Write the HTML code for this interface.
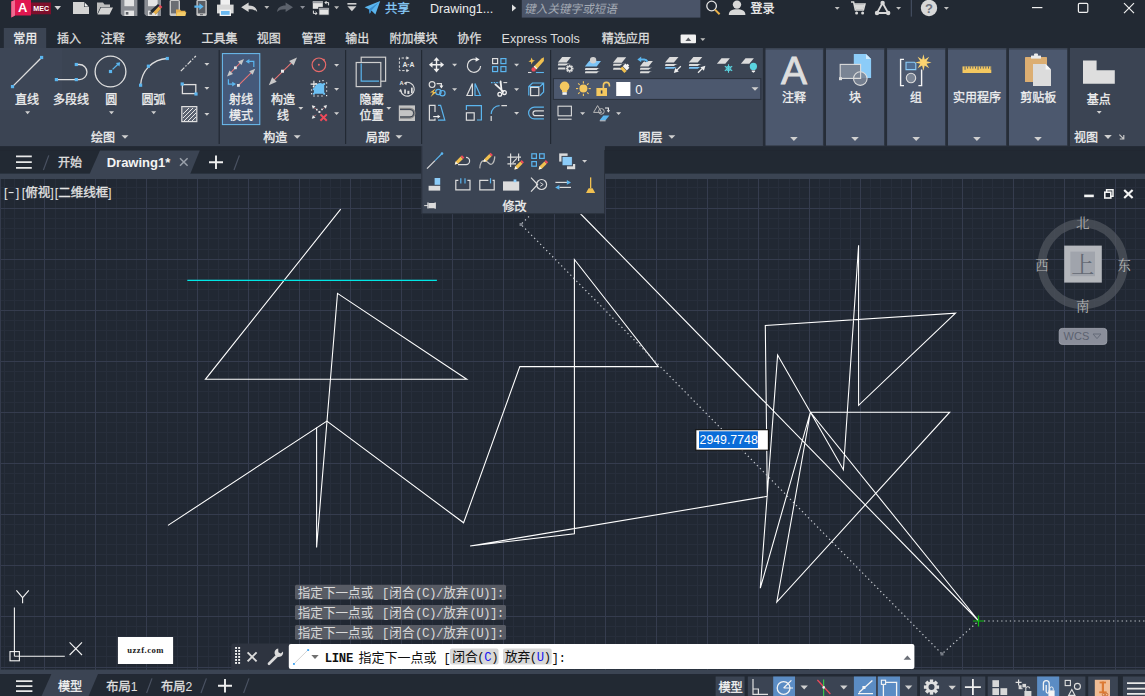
<!DOCTYPE html>
<html lang="zh"><head><meta charset="utf-8"><title>Drawing1.dwg</title>
<style>
html,body{margin:0;padding:0;background:#222933;}
body{width:1145px;height:696px;overflow:hidden;font-family:"Liberation Sans","Noto Sans CJK SC",sans-serif;}
#app{position:relative;width:1145px;height:696px;overflow:hidden;}
#app svg.main{position:absolute;left:0;top:0;display:block;}
text{white-space:pre;}
</style></head><body>
<div id="app"><svg class="main" width="1145" height="696" viewBox="0 0 1145 696">
<rect x="0" y="179" width="1145" height="491" fill="#212833"/><path d="M4.5 179V670M14.5 179V670M24.5 179V670M34.5 179V670M55.5 179V670M65.5 179V670M75.5 179V670M85.5 179V670M106.5 179V670M116.5 179V670M126.5 179V670M136.5 179V670M157.5 179V670M167.5 179V670M177.5 179V670M187.5 179V670M208.5 179V670M218.5 179V670M228.5 179V670M238.5 179V670M258.5 179V670M269.5 179V670M279.5 179V670M289.5 179V670M309.5 179V670M320.5 179V670M330.5 179V670M340.5 179V670M360.5 179V670M371.5 179V670M381.5 179V670M391.5 179V670M411.5 179V670M422.5 179V670M432.5 179V670M442.5 179V670M462.5 179V670M473.5 179V670M483.5 179V670M493.5 179V670M513.5 179V670M524.5 179V670M534.5 179V670M544.5 179V670M564.5 179V670M574.5 179V670M585.5 179V670M595.5 179V670M615.5 179V670M625.5 179V670M636.5 179V670M646.5 179V670M666.5 179V670M676.5 179V670M687.5 179V670M697.5 179V670M717.5 179V670M727.5 179V670M738.5 179V670M748.5 179V670M768.5 179V670M778.5 179V670M789.5 179V670M799.5 179V670M819.5 179V670M829.5 179V670M840.5 179V670M850.5 179V670M870.5 179V670M880.5 179V670M891.5 179V670M901.5 179V670M921.5 179V670M931.5 179V670M941.5 179V670M952.5 179V670M972.5 179V670M982.5 179V670M992.5 179V670M1003.5 179V670M1023.5 179V670M1033.5 179V670M1043.5 179V670M1054.5 179V670M1074.5 179V670M1084.5 179V670M1094.5 179V670M1105.5 179V670M1125.5 179V670M1135.5 179V670M0 187.5H1145M0 198.5H1145M0 218.5H1145M0 228.5H1145M0 238.5H1145M0 249.5H1145M0 269.5H1145M0 279.5H1145M0 289.5H1145M0 300.5H1145M0 320.5H1145M0 330.5H1145M0 340.5H1145M0 351.5H1145M0 371.5H1145M0 381.5H1145M0 391.5H1145M0 402.5H1145M0 422.5H1145M0 432.5H1145M0 442.5H1145M0 452.5H1145M0 473.5H1145M0 483.5H1145M0 493.5H1145M0 503.5H1145M0 524.5H1145M0 534.5H1145M0 544.5H1145M0 554.5H1145M0 575.5H1145M0 585.5H1145M0 595.5H1145M0 605.5H1145M0 626.5H1145M0 636.5H1145M0 646.5H1145M0 656.5H1145" stroke="#272e3b" stroke-width="1" fill="none" shape-rendering="crispEdges"/><path d="M44.5 179V670M95.5 179V670M146.5 179V670M197.5 179V670M248.5 179V670M299.5 179V670M350.5 179V670M401.5 179V670M452.5 179V670M503.5 179V670M554.5 179V670M605.5 179V670M656.5 179V670M707.5 179V670M758.5 179V670M809.5 179V670M860.5 179V670M911.5 179V670M962.5 179V670M1013.5 179V670M1064.5 179V670M1115.5 179V670M0 208.5H1145M0 259.5H1145M0 310.5H1145M0 361.5H1145M0 412.5H1145M0 463.5H1145M0 514.5H1145M0 565.5H1145M0 616.5H1145M0 667.5H1145" stroke="#353c4e" stroke-width="1" fill="none" shape-rendering="crispEdges"/><rect x="0" y="179" width="1" height="491" fill="#343b4c"/><polyline points="340.7,209.2 205.4,379.3 466.8,379.3 337.5,293.4 316.6,547.5 316.6,427.6" stroke="#ffffff" stroke-width="1.08" fill="none" stroke-linejoin="miter"/><polyline points="168,525.4 326.9,421.1 463.6,522.8 519.8,366.6 658.3,366.6 574.4,259.5 574.4,533.7 470.1,546 767.3,496.3 765.3,325.4 955.5,313.1 858.6,405.3 858.6,245.3 843.4,469.8 777.6,355 760.3,588.2 810.4,412.2 949.7,412.2 776.8,602 810.4,412.2 978.3,620.5 570,203" stroke="#ffffff" stroke-width="1.08" fill="none" stroke-linejoin="miter"/><line x1="187.3" y1="280.4" x2="436.9" y2="280.4" stroke="#00e6e6" stroke-width="1.2"/><polyline points="529,216.5 521,224.4 942,654 978.5,621" stroke="#c4c8ce" stroke-width="1.2" fill="none" stroke-dasharray="1.3 3"/><line x1="984" y1="621" x2="1145" y2="621" stroke="#c4c8ce" stroke-width="1.2" fill="none" stroke-dasharray="1.3 3"/><rect x="519.5" y="223" width="3" height="3" fill="#777c86"/><rect x="940.5" y="652.5" width="3" height="3" fill="#777c86"/><path d="M973 621H984M978.5 615.5V626.5" stroke="#10c010" stroke-width="1.2"/><rect x="0" y="0" width="1145" height="48" fill="#222933"/><path d="M11.3 1.5L15 0H31V15.5H15L11.3 17.5Z" fill="#e0174f"/><path d="M11.3 1.5L15 0V15.5L11.3 17.5Z" fill="#f06a90"/><rect x="31" y="2.5" width="20" height="11.8" fill="#7d0f2c"/><text x="18.11" y="12.40" font-size="13" fill="#ffffff" font-weight="bold" font-family='"Liberation Sans", sans-serif' >A</text><text x="33.31" y="11.40" font-size="7.1" fill="#ffffff" font-weight="bold" font-family='"Liberation Sans", sans-serif' >MEC</text><path d="M54.4 5.9h6.6l-3.3 4.2z" fill="#d4d4d4"/><path d="M73 2H84L89 7V14H73Z" fill="#d4d4d4"/><path d="M84 2V7H89Z" fill="#222933"/><path d="M84.6 2.6L88.4 6.4H84.6Z" fill="#f2f2f2"/><path d="M97 14.5V2.5H103L104.5 4.5H110V7H100.5L97 14.5Z" fill="#bdbdbd"/><path d="M101 7.6H113L109.5 14.6H97.6Z" fill="#d4d4d4"/><path d="M120.8 0H137.4V16H122.8L120.8 14Z" fill="#8a8d93"/><rect x="124.39999999999999" y="0" width="9.6" height="6.2" fill="#e4e4e4"/><rect x="124.39999999999999" y="10.6" width="9.6" height="5.4" fill="#e4e4e4"/><rect x="125.8" y="12" width="2.6" height="2.6" fill="#5a5d63"/><path d="M144.4 0H161.0V16H146.4L144.4 14Z" fill="#8a8d93"/><rect x="148.0" y="0" width="9.6" height="6.2" fill="#e4e4e4"/><rect x="148.0" y="10.6" width="9.6" height="5.4" fill="#e4e4e4"/><rect x="149.4" y="12" width="2.6" height="2.6" fill="#5a5d63"/><path d="M150 11L158 4L162 7.6L155 15Z" fill="#222933"/><path d="M152.6 15.6L153.4 12.2L158.6 6.4L161 8.6L155.8 14.4Z" fill="#e8b04a"/><path d="M158.6 6.4L160 4.8L162.4 7L161 8.6Z" fill="#e84a5a"/><path d="M152.6 15.6L153.4 12.2L155.8 14.4Z" fill="#e4e4e4"/><rect x="169.6" y="0" width="10.4" height="16" rx="1.4" fill="#c8c8c8"/><rect x="171" y="1" width="7.6" height="12.4" fill="#6a6d73"/><path d="M176 9.5H180L181 10.8H185.4V16H176Z" fill="#e8b04a"/><path d="M177.6 12.2H186.4L185 16H176Z" fill="#f4cc6a"/><rect x="196.4" y="0" width="10.4" height="16" rx="1.4" fill="#c8c8c8"/><rect x="197.8" y="1" width="7.6" height="12.4" fill="#5a5d63"/><rect x="200" y="14.2" width="3" height="1" fill="#5a5d63"/><path d="M194.4 5.4H199.4V3.2L203.6 6.6L199.4 10V7.8H194.4Z" fill="#5bb5ee"/><rect x="220.4" y="0" width="9.6" height="5" fill="#f0f0f0"/><path d="M217 4.6H233.6V13.4H217Z" fill="#d8d8d8"/><rect x="219.6" y="9.6" width="11.4" height="6.4" fill="#f4f4f4"/><rect x="221" y="11" width="8.6" height="3.8" fill="#6ab8f0"/><path d="M241.2 7.2L248.6 2.6V5.6C253.79999999999998 5.6 256.8 8 257.2 12C255.2 9.8 252.79999999999998 9.2 248.6 9.2V12Z" fill="#d4d4d4"/><path d="M264.3 5.9h5l-2.5 3z" fill="#b8b8b8"/><g transform="translate(570 0) scale(-1 1)"><path d="M277 7.2L284.4 2.6V5.6C289.6 5.6 292.6 8 293 12C291 9.8 288.6 9.2 284.4 9.2V12Z" fill="#5c626c"/></g><path d="M300.1 5.9h5l-2.5 3z" fill="#8a8e96"/><rect x="312.8" y="1.2" width="10" height="7.6" fill="#e4e4e4"/><rect x="312.8" y="1.2" width="10" height="2" fill="#9a9da3"/><rect x="318.8" y="7.4" width="10.4" height="7.8" fill="#e4e4e4" stroke="#222933" stroke-width="1"/><rect x="319.3" y="7.9" width="9.4" height="2" fill="#9a9da3"/><path d="M325 2.6H328.6V5.4M326.6 1L325 2.6L326.6 4.2" stroke="#e4e4e4" stroke-width="1" fill="none"/><path d="M313.4 10.6V13.4H317M315.4 11.8L317 13.4L315.4 15" stroke="#e4e4e4" stroke-width="1" fill="none"/><path d="M334.1 6.3h5l-2.5 3z" fill="#b8b8b8"/><rect x="347.4" y="3" width="9" height="1.6" fill="#d0d0d0"/><path d="M347.4 6.3h9l-4.5 5z" fill="#d0d0d0"/><path d="M364.6 7.2L380.2 1L375.4 14.6L371.4 10.4L369.8 13.8L368.8 9.2Z" fill="#5bb5ee"/><path d="M368.8 9.2L378.6 2.6L371.4 10.4L369.8 13.8Z" fill="#3a8fd0"/><text x="385.00" y="13.00" font-size="12.4" fill="#86c8f6" stroke="#86c8f6" stroke-width="0.3" font-family='"Liberation Sans", "Noto Sans CJK SC", sans-serif'>共享</text><text x="430.00" y="13.00" font-size="12.5" fill="#ececec" font-family='"Liberation Sans", sans-serif' >Drawing1...</text><path d="M512 4.6L516.2 8.1L512 11.6Z" fill="#e0e0e0"/><rect x="521.8" y="0" width="178.6" height="17.6" fill="#4a5468"/><text transform="translate(524.20 12.60) skewX(-12)" x="0" y="0" font-size="11.6" fill="#a4aab4" font-family='"Liberation Sans", "Noto Sans CJK SC", sans-serif'>键入关键字或短语</text><circle cx="711.6" cy="6" r="4.8" fill="none" stroke="#e4e4e4" stroke-width="1.3"/><path d="M715 9.6L719.6 14.2" stroke="#e8b04a" stroke-width="2"/><circle cx="737" cy="4.6" r="4.2" fill="#d8d8d8"/><path d="M728.8 15C728.8 10.6 732 9.2 737 9.2C742 9.2 745.4 10.6 745.4 15Z" fill="#d8d8d8"/><text x="750.40" y="13.00" font-size="12" fill="#f0f0f0" stroke="#f0f0f0" stroke-width="0.3" font-family='"Liberation Sans", "Noto Sans CJK SC", sans-serif'>登录</text><path d="M834.7 6.9h5l-2.5 2.8z" fill="#c0c0c0"/><path d="M851 2H853.6L855.4 10H863.4L865 4H854" stroke="#d8d8d8" stroke-width="1.5" fill="none"/><path d="M854.4 4.4H864.6L863.2 9.4H855.6Z" fill="#d8d8d8"/><circle cx="856.6" cy="13" r="1.5" fill="#d8d8d8"/><circle cx="862.6" cy="13" r="1.5" fill="#d8d8d8"/><path d="M882.6 3L877 13H888.2Z" fill="none" stroke="#d8d8d8" stroke-width="1.8" stroke-linejoin="round"/><circle cx="882.6" cy="3" r="2.2" fill="#d8d8d8"/><circle cx="877" cy="13" r="2.2" fill="#d8d8d8"/><circle cx="888.2" cy="13" r="2.2" fill="#d8d8d8"/><path d="M896.1 6.9h5l-2.5 2.8z" fill="#c0c0c0"/><rect x="910.8" y="0" width="1" height="16.6" fill="#4a5468"/><circle cx="929" cy="8" r="8.2" fill="#d8d8d8"/><text x="925.03" y="12.60" font-size="13" fill="#70747e" font-weight="bold" font-family='"Liberation Sans", sans-serif' >?</text><path d="M943.9 6.9h5l-2.5 2.8z" fill="#c0c0c0"/><path d="M1032 7.6H1042.4" stroke="#f0f0f0" stroke-width="1.2"/><rect x="1078.4" y="3.4" width="9.4" height="9" rx="1.2" fill="none" stroke="#f0f0f0" stroke-width="1.2"/><path d="M1124 3.2L1134 13.2M1134 3.2L1124 13.2" stroke="#f0f0f0" stroke-width="1.2"/><rect x="3.8" y="28" width="42.4" height="20.4" fill="#3b4453"/><text x="13.20" y="43.20" font-size="12" fill="#f0f0f0" stroke="#f0f0f0" stroke-width="0.3" font-family='"Liberation Sans", "Noto Sans CJK SC", sans-serif'>常用</text><text x="57.00" y="43.20" font-size="12" fill="#dcdcdc" stroke="#dcdcdc" stroke-width="0.3" font-family='"Liberation Sans", "Noto Sans CJK SC", sans-serif'>插入</text><text x="100.80" y="43.20" font-size="12" fill="#dcdcdc" stroke="#dcdcdc" stroke-width="0.3" font-family='"Liberation Sans", "Noto Sans CJK SC", sans-serif'>注释</text><text x="145.10" y="43.20" font-size="12" fill="#dcdcdc" stroke="#dcdcdc" stroke-width="0.3" font-family='"Liberation Sans", "Noto Sans CJK SC", sans-serif'>参数化</text><text x="201.40" y="43.20" font-size="12" fill="#dcdcdc" stroke="#dcdcdc" stroke-width="0.3" font-family='"Liberation Sans", "Noto Sans CJK SC", sans-serif'>工具集</text><text x="256.80" y="43.20" font-size="12" fill="#dcdcdc" stroke="#dcdcdc" stroke-width="0.3" font-family='"Liberation Sans", "Noto Sans CJK SC", sans-serif'>视图</text><text x="301.50" y="43.20" font-size="12" fill="#dcdcdc" stroke="#dcdcdc" stroke-width="0.3" font-family='"Liberation Sans", "Noto Sans CJK SC", sans-serif'>管理</text><text x="345.30" y="43.20" font-size="12" fill="#dcdcdc" stroke="#dcdcdc" stroke-width="0.3" font-family='"Liberation Sans", "Noto Sans CJK SC", sans-serif'>输出</text><text x="389.40" y="43.20" font-size="12" fill="#dcdcdc" stroke="#dcdcdc" stroke-width="0.3" font-family='"Liberation Sans", "Noto Sans CJK SC", sans-serif'>附加模块</text><text x="457.30" y="43.20" font-size="12" fill="#dcdcdc" stroke="#dcdcdc" stroke-width="0.3" font-family='"Liberation Sans", "Noto Sans CJK SC", sans-serif'>协作</text><text x="501.60" y="43.00" font-size="12.6" fill="#dcdcdc" font-family='"Liberation Sans", sans-serif' >Express Tools</text><text x="601.70" y="43.20" font-size="12" fill="#dcdcdc" stroke="#dcdcdc" stroke-width="0.3" font-family='"Liberation Sans", "Noto Sans CJK SC", sans-serif'>精选应用</text><rect x="680.6" y="34.6" width="15.4" height="8.6" rx="1" fill="#f0f0f0"/><path d="M685.4 41L688.3 37.4L691.2 41Z" fill="#5a5d63"/><path d="M700.3 38.2h5l-2.5 2.8z" fill="#c0c0c0"/><rect x="0" y="48" width="1145" height="98.4" fill="#3b4453"/><rect x="0" y="146.4" width="1145" height="4" fill="#222933"/><rect x="0" y="48" width="62" height="62" fill="#3d4656"/><path d="M12.5 86.6L41.6 57.5" stroke="#dedede" stroke-width="1.3" fill="none"/><rect x="10.9" y="85.0" width="3.2" height="3.2" fill="#5bb5ee"/><rect x="40.0" y="55.9" width="3.2" height="3.2" fill="#5bb5ee"/><text x="15.00" y="104.00" font-size="12" fill="#f0f0f0" stroke="#f0f0f0" stroke-width="0.3" font-family='"Liberation Sans", "Noto Sans CJK SC", sans-serif'>直线</text><path d="M25.1 111.3h5l-2.5 3z" fill="#d0d0d0"/><path d="M56.4 79.6H79.4A7.55 7.55 0 0 0 79.4 64.5H76.3" stroke="#dedede" stroke-width="1.3" fill="none"/><rect x="54.8" y="78.0" width="3.2" height="3.2" fill="#5bb5ee"/><rect x="74.7" y="78.0" width="3.2" height="3.2" fill="#5bb5ee"/><rect x="74.7" y="62.9" width="3.2" height="3.2" fill="#5bb5ee"/><text x="53.00" y="104.00" font-size="12" fill="#f0f0f0" stroke="#f0f0f0" stroke-width="0.3" font-family='"Liberation Sans", "Noto Sans CJK SC", sans-serif'>多段线</text><circle cx="110.5" cy="71.5" r="15.4" stroke="#dedede" stroke-width="1.3" fill="none"/><rect x="108.9" y="69.9" width="3.2" height="3.2" fill="#5bb5ee"/><path d="M112.6 69.4L118 64.2" stroke="#5bb5ee" stroke-width="1.3"/><path d="M120.2 62.2L119.4 66.6L115.8 63Z" fill="#5bb5ee"/><text x="105.20" y="104.00" font-size="12" fill="#f0f0f0" stroke="#f0f0f0" stroke-width="0.3" font-family='"Liberation Sans", "Noto Sans CJK SC", sans-serif'>圆</text><path d="M109.0 111.3h5l-2.5 3z" fill="#d0d0d0"/><path d="M140.6 85.2C141.4 71 152 59.4 167.3 58.5" stroke="#dedede" stroke-width="1.3" fill="none"/><rect x="139.0" y="83.6" width="3.2" height="3.2" fill="#5bb5ee"/><rect x="146.8" y="64.6" width="3.2" height="3.2" fill="#5bb5ee"/><rect x="165.7" y="56.9" width="3.2" height="3.2" fill="#5bb5ee"/><text x="141.40" y="104.00" font-size="12" fill="#f0f0f0" stroke="#f0f0f0" stroke-width="0.3" font-family='"Liberation Sans", "Noto Sans CJK SC", sans-serif'>圆弧</text><path d="M151.2 111.3h5l-2.5 3z" fill="#d0d0d0"/><path d="M180.8 71.1L195.9 56" stroke="#dedede" stroke-width="1.2" stroke-dasharray="5 1.6 1.4 1.6" fill="none"/><path d="M204.4 63.0h5l-2.5 2.8z" fill="#d0d0d0"/><rect x="182.4" y="84.6" width="13.4" height="9" stroke="#dedede" stroke-width="1.3" fill="none"/><rect x="180.6" y="82.4" width="3.2" height="3.2" fill="#5bb5ee"/><rect x="194.4" y="92.4" width="3.2" height="3.2" fill="#5bb5ee"/><path d="M204.4 87.0h5l-2.5 2.8z" fill="#d0d0d0"/><rect x="181.8" y="106.6" width="15" height="15" fill="#5a6270" stroke="#dedede" stroke-width="1.2"/><path d="M183 114L189 108M183 118L193 108M184 121L196 109M188 121L196 113M192 121L196 117" stroke="#e8e8e8" stroke-width="1"/><path d="M204.4 113.0h5l-2.5 2.8z" fill="#d0d0d0"/><text x="91.00" y="142.40" font-size="12" fill="#f0f0f0" stroke="#f0f0f0" stroke-width="0.3" font-family='"Liberation Sans", "Noto Sans CJK SC", sans-serif'>绘图</text><path d="M121.5 135.2h7l-3.5 3.6z" fill="#d0d0d0"/><rect x="218.6" y="50" width="1.2" height="94" fill="#222933"/><rect x="222.4" y="53.6" width="37.4" height="71" fill="#45597a" stroke="#6cbef2" stroke-width="1"/><path d="M229.4 74L241.4 61.6" stroke="#ea7474" stroke-width="1.05"/><path d="M244.0 59.0L241.5 65.0L238.0 61.5Z" fill="#c8c8c8"/><path d="M227.0 76.4L229.5 70.4L233.0 73.9Z" fill="#c8c8c8"/><rect x="234.0" y="66.4" width="2.8" height="2.8" fill="#e4e4e4"/><path d="M238.4 85.4L252.6 71.4" stroke="#ea7474" stroke-width="1.05"/><path d="M255.2 68.8L252.7 74.8L249.2 71.3Z" fill="#c8c8c8"/><rect x="237.0" y="84.0" width="2.8" height="2.8" fill="#e4e4e4"/><path d="M253.8 67V61.4H249" stroke="#5bb5ee" stroke-width="1.2" fill="none"/><path d="M245.6 61.4L249.4 59.0L249.4 63.8Z" fill="#5bb5ee"/><path d="M228.4 79.3V84.1H232.6" stroke="#5bb5ee" stroke-width="1.2" fill="none"/><path d="M236.0 84.1L232.2 86.5L232.2 81.7Z" fill="#5bb5ee"/><text x="229.00" y="103.60" font-size="12" fill="#f0f0f0" stroke="#f0f0f0" stroke-width="0.3" font-family='"Liberation Sans", "Noto Sans CJK SC", sans-serif'>射线</text><text x="229.00" y="120.20" font-size="12" fill="#f0f0f0" stroke="#f0f0f0" stroke-width="0.3" font-family='"Liberation Sans", "Noto Sans CJK SC", sans-serif'>模式</text><path d="M272.6 81.4L293.2 61.2" stroke="#ea7474" stroke-width="1.05"/><path d="M297.0 57.5L293.6 65.4L289.1 60.9Z" fill="#c8c8c8"/><path d="M268.8 85.2L272.2 77.3L276.7 81.8Z" fill="#c8c8c8"/><rect x="281.0" y="69.7" width="3" height="3" fill="#eaeaea"/><text x="271.00" y="103.60" font-size="12" fill="#f0f0f0" stroke="#f0f0f0" stroke-width="0.3" font-family='"Liberation Sans", "Noto Sans CJK SC", sans-serif'>构造</text><text x="277.00" y="120.20" font-size="12" fill="#f0f0f0" stroke="#f0f0f0" stroke-width="0.3" font-family='"Liberation Sans", "Noto Sans CJK SC", sans-serif'>线</text><path d="M298.3 107.0h5l-2.5 2.8z" fill="#d0d0d0"/><circle cx="318.9" cy="64.8" r="6.8" fill="none" stroke="#e86a6a" stroke-width="1.2"/><circle cx="318.9" cy="64.8" r="1" fill="#e86a6a"/><circle cx="323.8" cy="59.8" r="1" fill="#e86a6a"/><path d="M334.1 64.0h5l-2.5 2.8z" fill="#d0d0d0"/><path d="M313.9 93.7V89.2C314.4 85.6 317 83.2 320.2 82.9L324.2 84.1V93.7Z" fill="#6cc0f4"/><rect x="311.0" y="93.1" width="1.2" height="1.2" fill="#f0f0f0"/><rect x="311.0" y="89.4" width="1.2" height="1.2" fill="#f0f0f0"/><rect x="312.8" y="86.0" width="1.2" height="1.2" fill="#f0f0f0"/><rect x="315.4" y="83.0" width="1.2" height="1.2" fill="#f0f0f0"/><rect x="319.0" y="80.6" width="1.2" height="1.2" fill="#f0f0f0"/><rect x="322.4" y="80.0" width="1.2" height="1.2" fill="#f0f0f0"/><rect x="326.0" y="82.4" width="1.2" height="1.2" fill="#f0f0f0"/><rect x="326.0" y="86.4" width="1.2" height="1.2" fill="#f0f0f0"/><rect x="326.0" y="90.4" width="1.2" height="1.2" fill="#f0f0f0"/><rect x="326.0" y="95.0" width="1.2" height="1.2" fill="#f0f0f0"/><rect x="321.4" y="95.4" width="1.2" height="1.2" fill="#f0f0f0"/><rect x="317.4" y="95.4" width="1.2" height="1.2" fill="#f0f0f0"/><rect x="313.4" y="95.4" width="1.2" height="1.2" fill="#f0f0f0"/><rect x="312.9" y="92.8" width="1.9" height="1.9" fill="#6cc0f4"/><rect x="323.2" y="92.8" width="1.9" height="1.9" fill="#6cc0f4"/><rect x="323.2" y="83.1" width="1.9" height="1.9" fill="#6cc0f4"/><rect x="312.9" y="88.2" width="1.9" height="1.9" fill="#6cc0f4"/><path d="M310.6 84.1H317.2M313.9 80.8V87.4" stroke="#f0f0f0" stroke-width="1.1"/><path d="M334.1 88.0h5l-2.5 2.8z" fill="#d0d0d0"/><path d="M313 106.4L317 110.4M326 106L322 110M313 117.6L316.6 114" stroke="#f08080" stroke-width="1" stroke-dasharray="1.2 1.2"/><path d="M311.8 105.2L315.5 106.3L312.9 108.9Z" fill="#e8e8e8"/><path d="M327.0 105.0L325.9 108.7L323.3 106.1Z" fill="#e8e8e8"/><path d="M311.8 118.8L312.9 115.1L315.5 117.7Z" fill="#e8e8e8"/><rect x="318.4" y="110.9" width="2" height="2" fill="#e8e8e8"/><rect x="316.0" y="108.8" width="1.6" height="1.6" fill="#e8e8e8"/><rect x="321.2" y="108.6" width="1.6" height="1.6" fill="#e8e8e8"/><path d="M320.4 114.4L326.8 120.8M326.8 114.4L320.4 120.8" stroke="#f04a5a" stroke-width="2"/><path d="M334.1 112.2h5l-2.5 2.8z" fill="#d0d0d0"/><text x="263.20" y="142.40" font-size="12" fill="#f0f0f0" stroke="#f0f0f0" stroke-width="0.3" font-family='"Liberation Sans", "Noto Sans CJK SC", sans-serif'>构造</text><path d="M293.7 135.2h7l-3.5 3.6z" fill="#d0d0d0"/><rect x="345" y="50" width="1.2" height="94" fill="#222933"/><rect x="361.2" y="57.2" width="24.4" height="24" stroke="#cfcfcf" stroke-width="1.2" fill="none"/><rect x="356.2" y="62.5" width="24.6" height="24.1" fill="#3b4453" stroke="#cfcfcf" stroke-width="1.2"/><path d="M361.2 63.6V81.2H379" stroke="#5bb5ee" stroke-width="1.2" fill="none"/><text x="359.40" y="103.60" font-size="12" fill="#f0f0f0" stroke="#f0f0f0" stroke-width="0.3" font-family='"Liberation Sans", "Noto Sans CJK SC", sans-serif'>隐藏</text><text x="359.40" y="120.20" font-size="12" fill="#f0f0f0" stroke="#f0f0f0" stroke-width="0.3" font-family='"Liberation Sans", "Noto Sans CJK SC", sans-serif'>位置</text><path d="M386.3 107.0h5l-2.5 2.8z" fill="#d0d0d0"/><path d="M408 58H399.4V70.6H408" stroke="#dcdcdc" stroke-width="1" stroke-dasharray="2.4 1.6" fill="none"/><path d="M409.4 58.0L406.4 59.7L406.4 56.3Z" fill="#dcdcdc"/><path d="M409.4 70.6L406.4 72.3L406.4 68.9Z" fill="#dcdcdc"/><text x="402.40" y="67.20" font-size="6.8" fill="#e6e6e6" font-weight="bold" font-family='"Liberation Sans", sans-serif' >A</text><rect x="407.5" y="64.2" width="1.7" height="0.9" fill="#e6e6e6"/><text x="409.50" y="67.20" font-size="6.8" fill="#e6e6e6" font-weight="bold" font-family='"Liberation Sans", sans-serif' >A</text><path d="M405.4 82.6A6.9 6.9 0 1 1 400.7 91" stroke="#dcdcdc" stroke-width="1.1" fill="none"/><path d="M403.6 82.9L407.1 81.7L406.4 85.2Z" fill="#dcdcdc"/><path d="M400.9 88.8L402.1 91.9L398.7 91.3Z" fill="#dcdcdc"/><text x="399.60" y="85.40" font-size="5.6" fill="#e6e6e6" font-weight="bold" font-family='"Liberation Sans", sans-serif' >A</text><rect x="404.2" y="89.4" width="1.7" height="4.2" fill="#dcdcdc"/><rect x="407.4" y="90.8" width="2" height="3.2" fill="#dcdcdc"/><rect x="411" y="87.6" width="1.7" height="5.6" fill="#dcdcdc"/><rect x="398.8" y="105.4" width="16.2" height="15.6" fill="#c4c4c4"/><path d="M400 109H410A4 4 0 0 1 410 117.4H400" stroke="#8a8a8a" stroke-width="2.6" fill="none"/><path d="M400 109.4H410A3.6 3.6 0 0 1 410 117H400" stroke="#3b4453" stroke-width="1" fill="none"/><text x="365.70" y="142.40" font-size="12" fill="#f0f0f0" stroke="#f0f0f0" stroke-width="0.3" font-family='"Liberation Sans", "Noto Sans CJK SC", sans-serif'>局部</text><path d="M395.5 135.2h7l-3.5 3.6z" fill="#d0d0d0"/><rect x="421" y="50" width="1.2" height="94" fill="#222933"/><path d="M431.5 64.8H441.5M436.5 59.8V69.8" stroke="#f0f0f0" stroke-width="1.4"/><path d="M444.1 64.8L440.5 67.8L440.5 61.8Z" fill="#f0f0f0"/><path d="M428.9 64.8L432.5 61.8L432.5 67.8Z" fill="#f0f0f0"/><path d="M436.5 57.2L439.5 60.8L433.5 60.8Z" fill="#f0f0f0"/><path d="M436.5 72.4L433.5 68.8L439.5 68.8Z" fill="#f0f0f0"/><path d="M452.1 63.8h5l-2.5 2.8z" fill="#d0d0d0"/><path d="M476.4 59.6A6.6 6.6 0 1 0 480.6 66" stroke="#dcdcdc" stroke-width="1.2" fill="none"/><path d="M479.6 59.4L475.6 61.7L475.6 57.1Z" fill="#f0f0f0"/><rect x="492.6" y="58.6" width="5" height="5" stroke="#dcdcdc" stroke-width="1.2" fill="none"/><rect x="500.9" y="58.6" width="5" height="5" stroke="#5bb5ee" stroke-width="1.2" fill="none"/><rect x="492.6" y="66.6" width="5" height="5" stroke="#5bb5ee" stroke-width="1.2" fill="none"/><rect x="500.9" y="66.6" width="5" height="5" stroke="#5bb5ee" stroke-width="1.2" fill="none"/><path d="M514.1 63.8h5l-2.5 2.8z" fill="#d0d0d0"/><path d="M543.9 57.2V61L536.4 69.4L533.6 66.8L541.6 58.4Z" fill="#f0c050"/><circle cx="533.6" cy="69.4" r="2.2" fill="#f04a5a"/><path d="M534.2 66.2L536.8 68.8" stroke="#f4f4f4" stroke-width="1.3"/><path d="M531.6 57.4L532.6 60L535 60.4L532.8 61.8L531.4 64.6L531 62L528.4 61.4L530.6 60.2Z" fill="#f0c050"/><path d="M528 72.5H531.4" stroke="#dcdcdc" stroke-width="1.1"/><path d="M535.9 72.5H543.9" stroke="#5bb5ee" stroke-width="1.1"/><circle cx="432.1" cy="84.6" r="2.9" stroke="#dcdcdc" stroke-width="1.2" fill="none"/><path d="M436.6 83.6H441.4V86.4" stroke="#dcdcdc" stroke-width="1.2" fill="none"/><path d="M441.4 88.4L439.4 85.6L443.4 85.6Z" fill="#f0f0f0"/><circle cx="438.4" cy="92" r="2.7" stroke="#5bb5ee" stroke-width="1.2" fill="none"/><circle cx="442.4" cy="93.2" r="2.7" stroke="#5bb5ee" stroke-width="1.2" fill="none"/><path d="M435.6 88.6L430 92.6H433L430.6 97L436.4 92H433.4Z" fill="#f0c050"/><path d="M452.1 88.2h5l-2.5 2.8z" fill="#d0d0d0"/><path d="M472.4 83.6V95.5H466.9Z" stroke="#dcdcdc" stroke-width="1.2" fill="none"/><path d="M475 83.6V95.5H480.4Z" stroke="#5bb5ee" stroke-width="1.2" fill="none"/><path d="M491 82.6H499.4" stroke="#5bb5ee" stroke-width="1.1" stroke-dasharray="1.6 1"/><path d="M503.4 82.6H507.2" stroke="#dcdcdc" stroke-width="1.1"/><path d="M500.6 81.4L501.6 91M495.4 84.4L503.4 91.6" stroke="#f0f0f0" stroke-width="1.8" stroke-linecap="round"/><circle cx="499.8" cy="94.2" r="1.9" fill="none" stroke="#f0f0f0" stroke-width="1.3"/><circle cx="504.4" cy="92.6" r="1.9" fill="none" stroke="#f0f0f0" stroke-width="1.3"/><path d="M514.1 88.2h5l-2.5 2.8z" fill="#d0d0d0"/><path d="M528.8 95.6V86.6L532.4 83H543.6V92L540 95.6M543.6 83L540 86.6M539.6 86.6H529" stroke="#5bb5ee" stroke-width="1.2" fill="none"/><rect x="530.6" y="87.4" width="8.2" height="8.2" stroke="#dcdcdc" stroke-width="1.2" fill="none"/><path d="M435 112V105.4H429.4V120.2H435V118.4" stroke="#dcdcdc" stroke-width="1.2" fill="none"/><path d="M438 105.4H440.6L444.8 120.2H438" stroke="#5bb5ee" stroke-width="1.2" fill="none"/><path d="M433.2 116.6H438" stroke="#f0f0f0" stroke-width="1.2"/><path d="M440.4 116.6L437.6 118.4L437.6 114.8Z" fill="#f0f0f0"/><path d="M466.4 110V105.6H481.4V120H477" stroke="#5bb5ee" stroke-width="1.2" fill="none"/><rect x="466.4" y="112.8" width="7.8" height="7.4" stroke="#dcdcdc" stroke-width="1.2" fill="none"/><path d="M491.2 114A8.4 8.4 0 0 1 499.6 105.7" stroke="#5bb5ee" stroke-width="1.2" fill="none"/><path d="M501.4 105.7H507M491.2 116V121" stroke="#dcdcdc" stroke-width="1.2" fill="none"/><path d="M514.1 112.0h5l-2.5 2.8z" fill="#d0d0d0"/><path d="M543.9 107.2H534.4A5.8 5.8 0 0 0 534.4 118.8H543.9" stroke="#5bb5ee" stroke-width="1.2" fill="none"/><path d="M543.9 110.9H535.4A2.4 2.4 0 0 0 535.4 115.7H543.9" stroke="#dcdcdc" stroke-width="1.2" fill="none"/><rect x="550" y="50" width="1.2" height="94" fill="#222933"/><path d="M562.2 57H571.0L566.6 62.4H557.8Z" fill="#dcdcdc"/><path d="M558.3 63.4H570.3L568.6 63.8L566.6 65.4H557.8Z" fill="#dcdcdc"/><path d="M558.3 67.4H570.3L568.6 67.8L566.6 69.4H557.8Z" fill="#dcdcdc"/><circle cx="569.6" cy="68.6" r="4.6" fill="#3b4453"/><rect x="-0.9" y="-3.9" width="1.8" height="2" fill="#dcdcdc" transform="translate(569.6 68.6) rotate(0)"/><rect x="-0.9" y="-3.9" width="1.8" height="2" fill="#dcdcdc" transform="translate(569.6 68.6) rotate(45)"/><rect x="-0.9" y="-3.9" width="1.8" height="2" fill="#dcdcdc" transform="translate(569.6 68.6) rotate(90)"/><rect x="-0.9" y="-3.9" width="1.8" height="2" fill="#dcdcdc" transform="translate(569.6 68.6) rotate(135)"/><rect x="-0.9" y="-3.9" width="1.8" height="2" fill="#dcdcdc" transform="translate(569.6 68.6) rotate(180)"/><rect x="-0.9" y="-3.9" width="1.8" height="2" fill="#dcdcdc" transform="translate(569.6 68.6) rotate(225)"/><rect x="-0.9" y="-3.9" width="1.8" height="2" fill="#dcdcdc" transform="translate(569.6 68.6) rotate(270)"/><rect x="-0.9" y="-3.9" width="1.8" height="2" fill="#dcdcdc" transform="translate(569.6 68.6) rotate(315)"/><circle cx="569.6" cy="68.6" r="2.1" fill="none" stroke="#dcdcdc" stroke-width="1.3"/><path d="M589.2 61.1H601.0L596.7 66.6H584.9Z" fill="#7cc4f6"/><path d="M585.4 67.9H600.3L598.6 68.3L596.7 69.9H584.9Z" fill="#dcdcdc"/><path d="M585.4 71.2H600.3L598.6 71.6L596.7 73.2H584.9Z" fill="#dcdcdc"/><circle cx="593.1" cy="60.2" r="3.2" fill="#d0d0d0"/><path d="M617.4 57.3H626.2L621.8 62.699999999999996H613.0Z" fill="#dcdcdc"/><path d="M613.5 63.7H625.5L623.8 64.1L621.8 65.7H613.0Z" fill="#dcdcdc"/><path d="M613.5 67.7H625.5L623.8 68.1L621.8 69.7H613.0Z" fill="#dcdcdc"/><path d="M619.4 66.6L622.6 63.4L630 69.4L626 73.6Z" fill="#3b4453"/><path d="M620.2 68.6L622.4 66.6L626.6 71L624.4 73Z" fill="#f0c050"/><path d="M622.8 66.2L625.4 63.6L626.6 64.8L627.6 63.8L629.2 65.6L628.2 66.6L629.4 67.8L626.8 70.4Z" fill="#f4f4f4"/><path d="M644.2 61.1H652.9L648.6 66.4H639.9Z" fill="#dcdcdc"/><path d="M640.4 67.8H652.3L650.5 68.2L648.6 69.8H639.9Z" fill="#dcdcdc"/><path d="M640.4 71.2H652.3L650.5 71.6L648.6 73.2H639.9Z" fill="#dcdcdc"/><path d="M641 59.4H644.6A3.4 3.4 0 0 1 647.6 61.4" stroke="#3b4453" stroke-width="4" fill="none"/><path d="M641 59.4H644.2A3.6 3.6 0 0 1 647.4 61.6" stroke="#5bb5ee" stroke-width="2" fill="none"/><path d="M637.4 59.4L641.2 56.5L641.2 62.3Z" fill="#5bb5ee"/><path d="M669.6 57H678.5L673.9 62.4H665.0Z" fill="#dcdcdc"/><path d="M665.5 64.0H677.7L675.9 64.4L673.9 65.9H665.0Z" fill="#dcdcdc"/><path d="M665.5 66.9H677.7L675.9 67.3L673.9 68.8H665.0Z" fill="#7cc4f6"/><path d="M681.6 65.4L675 72" stroke="#3b4453" stroke-width="3.6"/><path d="M680.8 66.2L676.6 70.4" stroke="#f0f0f0" stroke-width="1.3"/><path d="M673.8 73.0L675.3 68.0L678.8 71.5Z" fill="#f0f0f0"/><path d="M693.4 57H702.3L697.7 62.4H688.8Z" fill="#dcdcdc"/><path d="M689.3 64.0H701.5L699.7 64.4L697.7 65.9H688.8Z" fill="#dcdcdc"/><path d="M689.3 66.9H701.5L699.7 67.3L697.7 68.8H688.8Z" fill="#7cc4f6"/><path d="M697 73.6L704 66.6" stroke="#3b4453" stroke-width="3.6"/><path d="M698 72.8L702.4 68.4" stroke="#f0f0f0" stroke-width="1.3"/><path d="M705.4 65.8L703.9 70.8L700.4 67.3Z" fill="#f0f0f0"/><path d="M721.5 58.2H729.9L725.3 63.7H716.9Z" fill="#dcdcdc"/><path d="M728.5 64.2V72.8M724.8 66.35L732.2 70.65M724.8 70.65L732.2 66.35" stroke="#5ad4e0" stroke-width="1.1"/><path d="M728.5 66L730.7 67.25V69.75L728.5 71L726.3 69.75V67.25Z" fill="none" stroke="#5ad4e0" stroke-width="0.9"/><path d="M745.5 58.2H753.9L749.3 63.7H740.9Z" fill="#dcdcdc"/><circle cx="753.4" cy="66.4" r="3.6" fill="#5ad4e0"/><path d="M751.7 70.4H755.1V71.6L753.4 72.8L751.7 71.6Z" fill="#f4f4f4"/><rect x="553.4" y="78.6" width="207.4" height="20.8" fill="#4c586e" stroke="#2a313c" stroke-width="1"/><circle cx="564.6" cy="86.4" r="4.8" fill="#f4c860"/><path d="M562 90H567.2V92H562Z" fill="#f4c860"/><rect x="562.4" y="92.2" width="4.4" height="2.6" fill="#f4f4f4"/><circle cx="583.4" cy="88.6" r="4" fill="#f4c860"/><path d="M588.6 88.6L590.8 88.6" stroke="#f4c860" stroke-width="1.1"/><path d="M587.1 92.3L588.6 93.8" stroke="#f4c860" stroke-width="1.1"/><path d="M583.4 93.8L583.4 96.0" stroke="#f4c860" stroke-width="1.1"/><path d="M579.7 92.3L578.2 93.8" stroke="#f4c860" stroke-width="1.1"/><path d="M578.2 88.6L576.0 88.6" stroke="#f4c860" stroke-width="1.1"/><path d="M579.7 84.9L578.2 83.4" stroke="#f4c860" stroke-width="1.1"/><path d="M583.4 83.4L583.4 81.2" stroke="#f4c860" stroke-width="1.1"/><path d="M587.1 84.9L588.6 83.4" stroke="#f4c860" stroke-width="1.1"/><rect x="596.4" y="88" width="10.6" height="8" fill="#f4c860"/><path d="M603.4 88V85.4A3 3 0 0 1 609.4 85.4V86.6" stroke="#f4c860" stroke-width="1.6" fill="none"/><rect x="600.8" y="90.4" width="1.6" height="3.2" fill="#3b4453"/><rect x="616.2" y="82" width="14.2" height="14" fill="#ffffff"/><text x="635.20" y="93.60" font-size="13" fill="#f4f4f4" font-family='"Liberation Sans", sans-serif' >0</text><path d="M751.5 87.2h7l-3.5 3.6z" fill="#d0d0d0"/><rect x="558" y="106.2" width="13.4" height="9.6" fill="none" stroke="#dcdcdc" stroke-width="1.1"/><path d="M558 119.2H571.6" stroke="#dcdcdc" stroke-width="1.1"/><path d="M580.1 112.2h5l-2.5 2.8z" fill="#d0d0d0"/><path d="M597.6 105.6L601.6 112.4H593.6Z" fill="none" stroke="#b8b8b8" stroke-width="1"/><circle cx="601.4" cy="111.4" r="2.8" fill="none" stroke="#b8b8b8" stroke-width="1"/><path d="M605 108H608.4V110.6" stroke="#f0f0f0" stroke-width="1.1" fill="none"/><path d="M608.4 112.6L606.7 110.2L610.1 110.2Z" fill="#f0f0f0"/><path d="M603.4 115.4H609.4L605.6 120.2H599.6Z" fill="#5bb5ee"/><path d="M599.8 120.8H605.6" stroke="#f0f0f0" stroke-width="0.8"/><path d="M616.1 112.2h5l-2.5 2.8z" fill="#d0d0d0"/><text x="638.40" y="142.40" font-size="12" fill="#f0f0f0" stroke="#f0f0f0" stroke-width="0.3" font-family='"Liberation Sans", "Noto Sans CJK SC", sans-serif'>图层</text><path d="M668.3 135.2h7l-3.5 3.6z" fill="#d0d0d0"/><rect x="764.9" y="49.6" width="58.0" height="95.4" fill="#4c586e"/><path d="M790.1 137.0h7.6l-3.8 4z" fill="#d0d0d0"/><rect x="826" y="49.6" width="58.0" height="95.4" fill="#4c586e"/><path d="M851.2 137.0h7.6l-3.8 4z" fill="#d0d0d0"/><rect x="887.2" y="49.6" width="58.0" height="95.4" fill="#4c586e"/><path d="M912.4 137.0h7.6l-3.8 4z" fill="#d0d0d0"/><rect x="947.6" y="49.6" width="58.5" height="95.4" fill="#4c586e"/><path d="M973.1 137.0h7.6l-3.8 4z" fill="#d0d0d0"/><rect x="1008.8" y="49.6" width="58.5" height="95.4" fill="#4c586e"/><path d="M1034.2 137.0h7.6l-3.8 4z" fill="#d0d0d0"/><rect x="762.9" y="48" width="2.6" height="98.4" fill="#262d38"/><rect x="823.4" y="48" width="2.6" height="98.4" fill="#262d38"/><rect x="884.4" y="48" width="2.6" height="98.4" fill="#262d38"/><rect x="945.4" y="48" width="2.6" height="98.4" fill="#262d38"/><rect x="1006.4" y="48" width="2.6" height="98.4" fill="#262d38"/><rect x="1067.4" y="48" width="2.6" height="98.4" fill="#262d38"/><text x="780.99" y="84.30" font-size="39" fill="#dedede" font-family='"Liberation Sans", sans-serif' stroke="#dedede" stroke-width="0.9">A</text><text x="782.00" y="101.60" font-size="12" fill="#f0f0f0" stroke="#f0f0f0" stroke-width="0.3" font-family='"Liberation Sans", "Noto Sans CJK SC", sans-serif'>注释</text><path d="M853.8 54H866L871.1 59.1V77.9H853.8Z" fill="#8cccf8"/><path d="M866 54V59.1H871.1Z" fill="#d0eafc"/><rect x="840.2" y="64.4" width="20.4" height="14" fill="#7a8494" stroke="#dcdcdc" stroke-width="1.1"/><circle cx="860.3" cy="78.6" r="6.8" fill="#7a8494" fill-opacity="0.85" stroke="#dcdcdc" stroke-width="1.1"/><path d="M860.6 71.8V78.4H853.6" stroke="#dcdcdc" stroke-width="1.1" fill="none"/><rect x="839" y="77.2" width="3" height="3" fill="#dcdcdc"/><text x="849.00" y="101.60" font-size="12" fill="#f0f0f0" stroke="#f0f0f0" stroke-width="0.3" font-family='"Liberation Sans", "Noto Sans CJK SC", sans-serif'>块</text><path d="M904 59.4H900.6V85.6H904M918.4 85.6H921.6V69.4" stroke="#f4f4f4" stroke-width="1.4" fill="none"/><path d="M906 62.2H914.4L915.8 63.6V69.6H906Z" fill="#4e6c92" stroke="#8cccf8" stroke-width="1.1"/><circle cx="911" cy="78" r="4.7" fill="#7a8494" stroke="#dcdcdc" stroke-width="1.1"/><polygon points="923.4,54.3 924.7,59.4 929.2,56.7 926.5,61.2 931.6,62.5 926.5,63.8 929.2,68.3 924.7,65.6 923.4,70.7 922.1,65.6 917.6,68.3 920.3,63.8 915.2,62.5 920.3,61.2 917.6,56.7 922.1,59.4" fill="#fcd470"/><text x="910.00" y="101.60" font-size="12" fill="#f0f0f0" stroke="#f0f0f0" stroke-width="0.3" font-family='"Liberation Sans", "Noto Sans CJK SC", sans-serif'>组</text><rect x="962.5" y="66.4" width="28.8" height="6.6" fill="#f4c860"/><rect x="964.6" y="66.4" width="0.9" height="3.4" fill="#4c586e"/><rect x="967.2" y="66.4" width="0.9" height="2.2" fill="#4c586e"/><rect x="969.8" y="66.4" width="0.9" height="2.2" fill="#4c586e"/><rect x="972.4" y="66.4" width="0.9" height="2.2" fill="#4c586e"/><rect x="975.0" y="66.4" width="0.9" height="2.2" fill="#4c586e"/><rect x="977.6" y="66.4" width="0.9" height="3.4" fill="#4c586e"/><rect x="980.2" y="66.4" width="0.9" height="2.2" fill="#4c586e"/><rect x="982.8" y="66.4" width="0.9" height="2.2" fill="#4c586e"/><rect x="985.4" y="66.4" width="0.9" height="2.2" fill="#4c586e"/><rect x="988.0" y="66.4" width="0.9" height="2.2" fill="#4c586e"/><rect x="990.6" y="66.4" width="0.9" height="3.4" fill="#4c586e"/><text x="953.00" y="101.60" font-size="12" fill="#f0f0f0" stroke="#f0f0f0" stroke-width="0.3" font-family='"Liberation Sans", "Noto Sans CJK SC", sans-serif'>实用程序</text><rect x="1025" y="57" width="22" height="25" rx="0.6" fill="#dcae72"/><rect x="1031" y="55.6" width="10" height="3" fill="#ececec"/><rect x="1034" y="53.6" width="4" height="2.6" rx="1" fill="#ececec"/><path d="M1033 64H1045.6L1051 69.4V86H1033Z" fill="#dcdcdc"/><path d="M1045.6 64V69.4H1051Z" fill="#f8f8f8"/><text x="1020.20" y="101.60" font-size="12" fill="#f0f0f0" stroke="#f0f0f0" stroke-width="0.3" font-family='"Liberation Sans", "Noto Sans CJK SC", sans-serif'>剪贴板</text><path d="M1083 60.4H1096.6V70.2H1114.8V83.8H1083Z" fill="#dedede"/><text x="1086.80" y="104.00" font-size="12" fill="#f0f0f0" stroke="#f0f0f0" stroke-width="0.3" font-family='"Liberation Sans", "Noto Sans CJK SC", sans-serif'>基点</text><path d="M1096.7 111.0h5l-2.5 2.8z" fill="#d0d0d0"/><text x="1073.90" y="142.00" font-size="12" fill="#f0f0f0" stroke="#f0f0f0" stroke-width="0.3" font-family='"Liberation Sans", "Noto Sans CJK SC", sans-serif'>视图</text><path d="M1104.2 135.0h7.6l-3.8 4z" fill="#d0d0d0"/><path d="M1119.4 134.6L1123.4 138.6M1123.8 135V139H1119.8" stroke="#c8c8c8" stroke-width="1.2" fill="none"/><rect x="0" y="150.4" width="1145" height="23.4" fill="#222933"/><rect x="0" y="173.6" width="1145" height="5.4" fill="#3b4453"/><path d="M89.6 174L100 150.4H199.8L190.2 174Z" fill="#3b4453"/><path d="M16 156.4H31.8M16 162.1H31.8M16 167.8H31.8" stroke="#e8e8e8" stroke-width="1.7"/><path d="M43.4 170L48.8 155.4" stroke="#4a5262" stroke-width="1.2"/><path d="M234 170L239.4 155.4" stroke="#4a5262" stroke-width="1.2"/><text x="57.90" y="166.80" font-size="12" fill="#e0e0e0" stroke="#e0e0e0" stroke-width="0.3" font-family='"Liberation Sans", "Noto Sans CJK SC", sans-serif'>开始</text><text x="106.70" y="167.00" font-size="13" fill="#f4f4f4" font-weight="bold" font-family='"Liberation Sans", sans-serif' >Drawing1*</text><path d="M180 158.2L187.6 165.8M187.6 158.2L180 165.8" stroke="#9aa0aa" stroke-width="1.5"/><path d="M209 162.2H223M216 155.4V169" stroke="#f0f0f0" stroke-width="1.9"/><text x="3.90" y="196.80" font-size="12.6" fill="#e4e4e4" font-family='"Liberation Sans", sans-serif' >[</text><text x="15.70" y="196.80" font-size="12.6" fill="#e4e4e4" font-family='"Liberation Sans", sans-serif' >]</text><text x="21.80" y="196.80" font-size="12.6" fill="#e4e4e4" font-family='"Liberation Sans", sans-serif' >[</text><text x="50.30" y="196.80" font-size="12.6" fill="#e4e4e4" font-family='"Liberation Sans", sans-serif' >]</text><text x="54.70" y="196.80" font-size="12.6" fill="#e4e4e4" font-family='"Liberation Sans", sans-serif' >[</text><text x="108.00" y="196.80" font-size="12.6" fill="#e4e4e4" font-family='"Liberation Sans", sans-serif' >]</text><rect x="8.6" y="192" width="5" height="1.1" fill="#e4e4e4"/><text x="25.20" y="197.20" font-size="12.5" fill="#e4e4e4" stroke="#e4e4e4" stroke-width="0.3" font-family='"Liberation Sans", "Noto Sans CJK SC", sans-serif'>俯视</text><text x="58.20" y="197.20" font-size="12.5" fill="#e4e4e4" stroke="#e4e4e4" stroke-width="0.3" font-family='"Liberation Sans", "Noto Sans CJK SC", sans-serif'>二维线框</text><rect x="1084.2" y="194.6" width="9.6" height="2.6" fill="#f4f4f4"/><path d="M1106.6 192V189.8H1113V196.2H1110.8" stroke="#f4f4f4" stroke-width="1.5" fill="none"/><rect x="1104.8" y="192.2" width="6" height="5.8" fill="none" stroke="#f4f4f4" stroke-width="1.6"/><path d="M1124.2 190L1132.6 198M1132.6 190L1124.2 198" stroke="#f4f4f4" stroke-width="2.2"/><circle cx="1082.8" cy="264.1" r="40.8" fill="none" stroke="#585d66" stroke-opacity="0.62" stroke-width="8.4"/><rect x="1064.2" y="245.6" width="37.6" height="37" fill="#b4b7bc"/><rect x="1070.4" y="251.6" width="24.6" height="24.6" fill="#a0a4ac"/><text x="1071.30" y="273.20" font-size="23" fill="#646a74" font-family='"Liberation Serif", "Noto Serif CJK SC", serif'>上</text><text x="1076.10" y="228.10" font-size="13.4" fill="#b4b4b4" font-family='"Liberation Serif", "Noto Serif CJK SC", serif'>北</text><text x="1076.10" y="311.30" font-size="13.4" fill="#b4b4b4" font-family='"Liberation Serif", "Noto Serif CJK SC", serif'>南</text><text x="1035.20" y="269.90" font-size="13.4" fill="#b4b4b4" font-family='"Liberation Serif", "Noto Serif CJK SC", serif'>西</text><text x="1117.60" y="269.90" font-size="13.4" fill="#b4b4b4" font-family='"Liberation Serif", "Noto Serif CJK SC", serif'>东</text><rect x="1059.2" y="328.4" width="47.6" height="16" rx="3" fill="#8a8e9a" stroke="#a4a8b2" stroke-width="0.8"/><text x="1063.60" y="340.40" font-size="11" fill="#5c6270" font-family='"Liberation Sans", sans-serif' >WCS</text><path d="M1093 334L1097 338.6L1101 334Z" fill="none" stroke="#646a78" stroke-width="1"/><path d="M14.4 607.4V651.4M19.6 656.2H64.8" stroke="#f4f4f4" stroke-width="1.1"/><rect x="10" y="651.6" width="9.4" height="9.2" fill="none" stroke="#f4f4f4" stroke-width="1.1"/><path d="M14.4 651.6V656.2H19.4" stroke="#f4f4f4" stroke-width="1" fill="none"/><path d="M16.4 590.4L22.6 597.6L28.8 590.4M22.6 597.6V603.2" stroke="#f4f4f4" stroke-width="1.1" fill="none"/><path d="M69.6 642.4L82 655M82 642.4L69.6 655" stroke="#f4f4f4" stroke-width="1.1"/><rect x="117.9" y="637" width="55.2" height="27" fill="#ffffff"/><text x="127.24" y="653.40" font-size="8.6" fill="#181818" font-weight="bold" letter-spacing="0.5" font-family='"Liberation Serif", serif' >uzzf.com</text><rect x="295" y="584.8" width="211" height="14.8" rx="1.5" fill="#5c6068" fill-opacity="0.92"/><text x="297.70" y="597.20" font-size="12.6" fill="#d8d8d8" font-family='"Liberation Mono", "Noto Sans CJK SC", monospace'>指定下一点或</text><text x="381.72" y="597.20" font-size="12.6" fill="#d8d8d8" font-family='"Liberation Mono", monospace' >[</text><text x="389.30" y="597.20" font-size="12.6" fill="#d8d8d8" font-family='"Liberation Mono", "Noto Sans CJK SC", monospace'>闭合</text><text x="414.94" y="597.20" font-size="12.6" fill="#d8d8d8" font-family='"Liberation Mono", monospace' >(</text><text x="421.99" y="597.20" font-size="12.6" fill="#d8d8d8" font-family='"Liberation Mono", monospace' >C</text><text x="429.04" y="597.20" font-size="12.6" fill="#d8d8d8" font-family='"Liberation Mono", monospace' >)</text><text x="436.09" y="597.20" font-size="12.6" fill="#d8d8d8" font-family='"Liberation Mono", monospace' >/</text><text x="443.20" y="597.20" font-size="12.6" fill="#d8d8d8" font-family='"Liberation Mono", "Noto Sans CJK SC", monospace'>放弃</text><text x="469.34" y="597.20" font-size="12.6" fill="#d8d8d8" font-family='"Liberation Mono", monospace' >(</text><text x="476.19" y="597.20" font-size="12.6" fill="#d8d8d8" font-family='"Liberation Mono", monospace' >U</text><text x="483.04" y="597.20" font-size="12.6" fill="#d8d8d8" font-family='"Liberation Mono", monospace' >)</text><text x="489.89" y="597.20" font-size="12.6" fill="#d8d8d8" font-family='"Liberation Mono", monospace' >]</text><text x="496.74" y="597.20" font-size="12.6" fill="#d8d8d8" font-family='"Liberation Mono", monospace' >:</text><rect x="295" y="604.9" width="211" height="14.8" rx="1.5" fill="#5c6068" fill-opacity="0.92"/><text x="297.70" y="617.30" font-size="12.6" fill="#d8d8d8" font-family='"Liberation Mono", "Noto Sans CJK SC", monospace'>指定下一点或</text><text x="381.72" y="617.30" font-size="12.6" fill="#d8d8d8" font-family='"Liberation Mono", monospace' >[</text><text x="389.30" y="617.30" font-size="12.6" fill="#d8d8d8" font-family='"Liberation Mono", "Noto Sans CJK SC", monospace'>闭合</text><text x="414.94" y="617.30" font-size="12.6" fill="#d8d8d8" font-family='"Liberation Mono", monospace' >(</text><text x="421.99" y="617.30" font-size="12.6" fill="#d8d8d8" font-family='"Liberation Mono", monospace' >C</text><text x="429.04" y="617.30" font-size="12.6" fill="#d8d8d8" font-family='"Liberation Mono", monospace' >)</text><text x="436.09" y="617.30" font-size="12.6" fill="#d8d8d8" font-family='"Liberation Mono", monospace' >/</text><text x="443.20" y="617.30" font-size="12.6" fill="#d8d8d8" font-family='"Liberation Mono", "Noto Sans CJK SC", monospace'>放弃</text><text x="469.34" y="617.30" font-size="12.6" fill="#d8d8d8" font-family='"Liberation Mono", monospace' >(</text><text x="476.19" y="617.30" font-size="12.6" fill="#d8d8d8" font-family='"Liberation Mono", monospace' >U</text><text x="483.04" y="617.30" font-size="12.6" fill="#d8d8d8" font-family='"Liberation Mono", monospace' >)</text><text x="489.89" y="617.30" font-size="12.6" fill="#d8d8d8" font-family='"Liberation Mono", monospace' >]</text><text x="496.74" y="617.30" font-size="12.6" fill="#d8d8d8" font-family='"Liberation Mono", monospace' >:</text><rect x="295" y="625" width="211" height="14.8" rx="1.5" fill="#5c6068" fill-opacity="0.92"/><text x="297.70" y="637.40" font-size="12.6" fill="#d8d8d8" font-family='"Liberation Mono", "Noto Sans CJK SC", monospace'>指定下一点或</text><text x="381.72" y="637.40" font-size="12.6" fill="#d8d8d8" font-family='"Liberation Mono", monospace' >[</text><text x="389.30" y="637.40" font-size="12.6" fill="#d8d8d8" font-family='"Liberation Mono", "Noto Sans CJK SC", monospace'>闭合</text><text x="414.94" y="637.40" font-size="12.6" fill="#d8d8d8" font-family='"Liberation Mono", monospace' >(</text><text x="421.99" y="637.40" font-size="12.6" fill="#d8d8d8" font-family='"Liberation Mono", monospace' >C</text><text x="429.04" y="637.40" font-size="12.6" fill="#d8d8d8" font-family='"Liberation Mono", monospace' >)</text><text x="436.09" y="637.40" font-size="12.6" fill="#d8d8d8" font-family='"Liberation Mono", monospace' >/</text><text x="443.20" y="637.40" font-size="12.6" fill="#d8d8d8" font-family='"Liberation Mono", "Noto Sans CJK SC", monospace'>放弃</text><text x="469.34" y="637.40" font-size="12.6" fill="#d8d8d8" font-family='"Liberation Mono", monospace' >(</text><text x="476.19" y="637.40" font-size="12.6" fill="#d8d8d8" font-family='"Liberation Mono", monospace' >U</text><text x="483.04" y="637.40" font-size="12.6" fill="#d8d8d8" font-family='"Liberation Mono", monospace' >)</text><text x="489.89" y="637.40" font-size="12.6" fill="#d8d8d8" font-family='"Liberation Mono", monospace' >]</text><text x="496.74" y="637.40" font-size="12.6" fill="#d8d8d8" font-family='"Liberation Mono", monospace' >:</text><path d="M233.6 643.4H292V669.4H231.2V645.8A2.4 2.4 0 0 1 233.6 643.4Z" fill="#2e3440"/><rect x="235.1" y="647.0" width="1.9" height="1.9" fill="#f4f4f4"/><rect x="235.1" y="650.0" width="1.9" height="1.9" fill="#f4f4f4"/><rect x="235.1" y="653.0" width="1.9" height="1.9" fill="#f4f4f4"/><rect x="235.1" y="656.0" width="1.9" height="1.9" fill="#f4f4f4"/><rect x="235.1" y="659.0" width="1.9" height="1.9" fill="#f4f4f4"/><rect x="235.1" y="662.0" width="1.9" height="1.9" fill="#f4f4f4"/><rect x="238.2" y="647.0" width="1.9" height="1.9" fill="#f4f4f4"/><rect x="238.2" y="650.0" width="1.9" height="1.9" fill="#f4f4f4"/><rect x="238.2" y="653.0" width="1.9" height="1.9" fill="#f4f4f4"/><rect x="238.2" y="656.0" width="1.9" height="1.9" fill="#f4f4f4"/><rect x="238.2" y="659.0" width="1.9" height="1.9" fill="#f4f4f4"/><rect x="238.2" y="662.0" width="1.9" height="1.9" fill="#f4f4f4"/><path d="M247.6 652.4L256.6 661.4M256.6 652.4L247.6 661.4" stroke="#dcdcdc" stroke-width="1.9"/><path d="M269 663.8L276.8 656" stroke="#dcdcdc" stroke-width="2.7" stroke-linecap="round"/><path d="M283 651.6A4.3 4.3 0 1 1 278.2 648.4L278.4 652.2L280.8 653.4Z" fill="#dcdcdc"/><rect x="288.8" y="644" width="625.6" height="25" rx="2" fill="#ffffff"/><path d="M294.4 663.4L307.6 650.4" stroke="#d4d4d4" stroke-width="1"/><rect x="293" y="663" width="1.9" height="1.9" fill="#4aa8f0"/><rect x="307.2" y="649.1" width="1.9" height="1.9" fill="#4aa8f0"/><path d="M311.3 655.0h7.4l-3.7 4z" fill="#707070"/><rect x="450" y="648.6" width="48.5" height="15.8" rx="2" fill="#d8d8d8"/><rect x="503" y="648.6" width="48.7" height="15.8" rx="2" fill="#d8d8d8"/><text x="324.66" y="661.90" font-size="12.3" fill="#101010" font-weight="bold" font-family='"Liberation Mono", monospace' >L</text><text x="331.76" y="661.90" font-size="12.3" fill="#101010" font-weight="bold" font-family='"Liberation Mono", monospace' >I</text><text x="338.86" y="661.90" font-size="12.3" fill="#101010" font-weight="bold" font-family='"Liberation Mono", monospace' >N</text><text x="345.96" y="661.90" font-size="12.3" fill="#101010" font-weight="bold" font-family='"Liberation Mono", monospace' >E</text><text x="358.40" y="661.90" font-size="13" fill="#101010" font-family='"Liberation Mono", "Noto Sans CJK SC", monospace'>指定下一点或</text><text x="443.22" y="661.90" font-size="12.6" fill="#101010" font-family='"Liberation Mono", monospace' >[</text><text x="452.30" y="661.40" font-size="12.8" fill="#101010" font-family='"Liberation Mono", "Noto Sans CJK SC", monospace'>闭合</text><text x="477.31" y="661.40" font-size="12.2" fill="#101010" font-family='"Liberation Mono", monospace' >(</text><text x="484.26" y="661.40" font-size="12.2" fill="#1414f0" font-family='"Liberation Mono", monospace' >C</text><text x="491.21" y="661.40" font-size="12.2" fill="#101010" font-family='"Liberation Mono", monospace' >)</text><text x="504.70" y="661.40" font-size="12.8" fill="#101010" font-family='"Liberation Mono", "Noto Sans CJK SC", monospace'>放弃</text><text x="529.84" y="661.40" font-size="12.2" fill="#101010" font-family='"Liberation Mono", monospace' >(</text><text x="536.84" y="661.40" font-size="12.2" fill="#1414f0" font-family='"Liberation Mono", monospace' >U</text><text x="543.84" y="661.40" font-size="12.2" fill="#101010" font-family='"Liberation Mono", monospace' >)</text><text x="551.42" y="661.90" font-size="12.6" fill="#101010" font-family='"Liberation Mono", monospace' >]</text><text x="558.42" y="661.90" font-size="12.6" fill="#101010" font-family='"Liberation Mono", monospace' >:</text><path d="M903.6 659.8L907.4 655.6L911.2 659.8Z" fill="#6a6e76"/><rect x="695.8" y="429.7" width="72.6" height="20.5" fill="#ffffff" stroke="#0c0c0c" stroke-width="1.1"/><rect x="699" y="431.3" width="58.9" height="16.7" fill="#0a6cd8"/><text x="699.60" y="444.20" font-size="12.3" fill="#ffffff" font-family='"Liberation Sans", sans-serif' >2949.7748</text><rect x="421.3" y="146" width="183.6" height="68" fill="#3b4453"/><rect x="421.3" y="146" width="1" height="68" fill="#2a313c"/><rect x="604" y="150" width="1" height="64" fill="#2a313c"/><rect x="421.3" y="213.2" width="183.6" height="1" fill="#2a313c"/><path d="M427 168.7L435 160.6" stroke="#dcdcdc" stroke-width="1.2" fill="none"/><path d="M435 160.6L441.6 154" stroke="#5bb5ee" stroke-width="1.2" fill="none"/><circle cx="442" cy="153.6" r="1.3" fill="#5bb5ee"/><g transform="translate(454.8 164.6) scale(0.95)"><path d="M0 0L1 -3.2L6.2 -8.4L8.6 -6L3.4 -0.8Z" fill="#f0c050"/><path d="M6.2 -8.4L7.6 -9.8L10 -7.4L8.6 -6Z" fill="#f04a5a"/><path d="M0 0L1 -3.2L3.4 -0.8Z" fill="#f4f4f4"/></g><path d="M458 164.6H466A3.6 3.6 0 0 0 466 157.4" stroke="#dcdcdc" stroke-width="1.2" fill="none"/><path d="M479.8 168.4C480.4 158 486 160 488.6 163C491.6 166.4 494.4 163 494.8 156.4" stroke="#b8b8b8" stroke-width="1.2" fill="none"/><g transform="translate(483.4 162) scale(0.95)"><path d="M0 0L1 -3.2L6.2 -8.4L8.6 -6L3.4 -0.8Z" fill="#f0c050"/><path d="M6.2 -8.4L7.6 -9.8L10 -7.4L8.6 -6Z" fill="#f04a5a"/><path d="M0 0L1 -3.2L3.4 -0.8Z" fill="#f4f4f4"/></g><path d="M507.4 157.2H521M507.4 163.8H516M510.6 153.4V167M518.6 153.4V161" stroke="#dcdcdc" stroke-width="1.2" fill="none"/><path d="M512.6 162.8L516.8 158.4" stroke="#dcdcdc" stroke-width="1.2" fill="none"/><g transform="translate(514.4 169.4) scale(0.95)"><path d="M0 0L1 -3.2L6.2 -8.4L8.6 -6L3.4 -0.8Z" fill="#f0c050"/><path d="M6.2 -8.4L7.6 -9.8L10 -7.4L8.6 -6Z" fill="#f04a5a"/><path d="M0 0L1 -3.2L3.4 -0.8Z" fill="#f4f4f4"/></g><rect x="531.8" y="153.8" width="4.6" height="4.6" stroke="#5bb5ee" stroke-width="1.2" fill="none"/><rect x="539.6" y="153.8" width="4.6" height="4.6" stroke="#5bb5ee" stroke-width="1.2" fill="none"/><rect x="531.8" y="161.6" width="4.6" height="4.6" stroke="#5bb5ee" stroke-width="1.2" fill="none"/><g transform="translate(538.6 169.4) scale(0.95)"><path d="M0 0L1 -3.2L6.2 -8.4L8.6 -6L3.4 -0.8Z" fill="#f0c050"/><path d="M6.2 -8.4L7.6 -9.8L10 -7.4L8.6 -6Z" fill="#f04a5a"/><path d="M0 0L1 -3.2L3.4 -0.8Z" fill="#f4f4f4"/></g><rect x="559.2" y="153.4" width="8.4" height="8.2" fill="#dcdcdc"/><rect x="567" y="164" width="8.2" height="5.2" fill="#dcdcdc"/><rect x="562" y="156.4" width="10.4" height="9.4" fill="#8cccf8" stroke="#3b4453" stroke-width="1"/><path d="M582.1 160.0h5l-2.5 2.8z" fill="#d0d0d0"/><rect x="428.6" y="185.8" width="11.6" height="4.8" fill="#dcdcdc"/><rect x="434.6" y="178" width="5.6" height="6.8" fill="#8cccf8"/><path d="M458.4 180.4H455.8V189.8H470V180.4H467.4" stroke="#dcdcdc" stroke-width="1.2" fill="none"/><path d="M460.8 178.2V183.4M465 178.2V183.4" stroke="#5bb5ee" stroke-width="1.2" fill="none"/><path d="M488.4 180.4H479.8V189.8H494.2V180.4H492.6" stroke="#dcdcdc" stroke-width="1.2" fill="none"/><path d="M490.5 178.2V183.4" stroke="#5bb5ee" stroke-width="1.2" fill="none"/><rect x="503" y="181.4" width="16.2" height="9.2" fill="#dcdcdc"/><rect x="513.6" y="179.4" width="2.8" height="2.8" fill="#8cccf8"/><path d="M531 177.6L537.6 184.5L531 191.6" stroke="#dcdcdc" stroke-width="1.2" fill="none"/><circle cx="541.6" cy="184.5" r="5" stroke="#dcdcdc" stroke-width="1.2" fill="none"/><path d="M540.2 182.6L543.2 184.5L540.2 186.4" stroke="#dcdcdc" stroke-width="0.9" fill="none"/><path d="M555.4 182.4H567" stroke="#dcdcdc" stroke-width="1.2" fill="none"/><path d="M571.0 182.4L566.8 184.7L566.8 180.1Z" fill="#5bb5ee"/><path d="M559.4 187.4H571" stroke="#dcdcdc" stroke-width="1.2" fill="none"/><path d="M555.2 187.4L559.4 185.1L559.4 189.7Z" fill="#5bb5ee"/><rect x="590" y="177.4" width="1.3" height="10.8" fill="#f0c050"/><path d="M588.6 188.2H592.6L595.2 193H586Z" fill="#f0c050"/><path d="M424.2 205.6H428" stroke="#dcdcdc" stroke-width="1"/><path d="M428 202.6V208.6M429.6 203.6H434.4V207.6H429.6ZM435.2 202.4V208.8" stroke="#dcdcdc" stroke-width="1.4" fill="#dcdcdc"/><text x="502.50" y="211.00" font-size="12" fill="#f0f0f0" stroke="#f0f0f0" stroke-width="0.3" font-family='"Liberation Sans", "Noto Sans CJK SC", sans-serif'>修改</text><rect x="0" y="669.6" width="1145" height="4.6" fill="#3b4453"/><rect x="0" y="674.2" width="1145" height="22" fill="#222933"/><path d="M41.6 696L51.4 674H98L88.6 696Z" fill="#3b4453"/><path d="M16 681.2H32.4M16 686.2H32.4M16 691.2H32.4" stroke="#e8e8e8" stroke-width="1.7"/><path d="M146.6 693L152 678.4" stroke="#4a5262" stroke-width="1.2"/><path d="M201 693L206.4 678.4" stroke="#4a5262" stroke-width="1.2"/><path d="M243.6 693L249 678.4" stroke="#4a5262" stroke-width="1.2"/><text x="57.90" y="690.60" font-size="12.2" fill="#f4f4f4" stroke="#f4f4f4" stroke-width="0.3" font-family='"Liberation Sans", "Noto Sans CJK SC", sans-serif'>模型</text><text x="106.30" y="690.60" font-size="12.2" fill="#e0e0e0" stroke="#e0e0e0" stroke-width="0.3" font-family='"Liberation Sans", "Noto Sans CJK SC", sans-serif'>布局</text><text x="130.70" y="690.60" font-size="12.2" fill="#e0e0e0" font-family='"Liberation Sans", sans-serif' >1</text><text x="161.10" y="690.60" font-size="12.2" fill="#e0e0e0" stroke="#e0e0e0" stroke-width="0.3" font-family='"Liberation Sans", "Noto Sans CJK SC", sans-serif'>布局</text><text x="185.50" y="690.60" font-size="12.2" fill="#e0e0e0" font-family='"Liberation Sans", sans-serif' >2</text><path d="M218 685.8H232M225 679V692.6" stroke="#f0f0f0" stroke-width="1.9"/><rect x="715.6" y="676.5" width="29.0" height="20" fill="#3b4453"/><rect x="747.8" y="676.5" width="169.4" height="20" fill="#3b4453"/><rect x="920" y="676.5" width="40.2" height="20" fill="#3b4453"/><rect x="961.4" y="676.5" width="23.9" height="20" fill="#3b4453"/><rect x="987.7" y="676.5" width="97.7" height="20" fill="#3b4453"/><rect x="1088.2" y="676.5" width="29.7" height="20" fill="#3b4453"/><rect x="1122.9" y="676.5" width="22.1" height="20" fill="#3b4453"/><text x="718.40" y="691.80" font-size="12.2" fill="#f4f4f4" stroke="#f4f4f4" stroke-width="0.3" font-family='"Liberation Sans", "Noto Sans CJK SC", sans-serif'>模型</text><path d="M753 679V694.4H768M753 689H758.4V694" stroke="#e0e0e0" stroke-width="1.2" fill="none"/><rect x="773.2" y="676.5" width="21.8" height="20" fill="#5b8cc4"/><circle cx="783.6" cy="688" r="6.4" fill="none" stroke="#f4f4f4" stroke-width="1.3"/><path d="M783.6 688H793M783.6 688L791.4 680.4" stroke="#f4f4f4" stroke-width="1.2"/><path d="M800.5 685.6h7.4l-3.7 4z" fill="#d0d0d0"/><path d="M817.4 680L830.4 694" stroke="#f04a5a" stroke-width="1.2"/><path d="M823.6 679.6V696" stroke="#3ac04a" stroke-width="1.2"/><circle cx="823.7" cy="687.4" r="1.3" fill="#f0f0f0"/><path d="M840.1 685.6h7.4l-3.7 4z" fill="#d0d0d0"/><rect x="853.9" y="676.5" width="22.1" height="20" fill="#5b8cc4"/><path d="M858 693.6H873M859 692.6L872.4 680.6" stroke="#f4f4f4" stroke-width="1.3" fill="none"/><rect x="862.4" y="686" width="3" height="3" fill="#f4f4f4"/><rect x="877.9" y="676.5" width="22.1" height="20" fill="#5b8cc4"/><path d="M883.4 685V696M885.6 682.4H896.6V696" stroke="#f4f4f4" stroke-width="1.3" fill="none"/><rect x="881.4" y="680.2" width="4.2" height="4.2" fill="none" stroke="#f4f4f4" stroke-width="1.1"/><path d="M904.9 685.6h7.4l-3.7 4z" fill="#d0d0d0"/><rect x="-1.7" y="-7.6" width="3.4" height="3.6" fill="#e0e0e0" transform="translate(931.5 687.1) rotate(0)"/><rect x="-1.7" y="-7.6" width="3.4" height="3.6" fill="#e0e0e0" transform="translate(931.5 687.1) rotate(45)"/><rect x="-1.7" y="-7.6" width="3.4" height="3.6" fill="#e0e0e0" transform="translate(931.5 687.1) rotate(90)"/><rect x="-1.7" y="-7.6" width="3.4" height="3.6" fill="#e0e0e0" transform="translate(931.5 687.1) rotate(135)"/><rect x="-1.7" y="-7.6" width="3.4" height="3.6" fill="#e0e0e0" transform="translate(931.5 687.1) rotate(180)"/><rect x="-1.7" y="-7.6" width="3.4" height="3.6" fill="#e0e0e0" transform="translate(931.5 687.1) rotate(225)"/><rect x="-1.7" y="-7.6" width="3.4" height="3.6" fill="#e0e0e0" transform="translate(931.5 687.1) rotate(270)"/><rect x="-1.7" y="-7.6" width="3.4" height="3.6" fill="#e0e0e0" transform="translate(931.5 687.1) rotate(315)"/><circle cx="931.5" cy="687.1" r="4.3" fill="none" stroke="#e0e0e0" stroke-width="2.6"/><path d="M948.5 685.8h7.4l-3.7 4z" fill="#d0d0d0"/><path d="M964.9 687.1H980.9M972.9 679.1V695.1" stroke="#f0f0f0" stroke-width="1.8"/><rect x="992.4" y="680.2" width="6.6" height="6.8" fill="#d8d8d8"/><rect x="992.4" y="688.2" width="6.6" height="6.8" fill="#d8d8d8"/><rect x="1000.4" y="688.2" width="6.8" height="6.8" fill="#d8d8d8"/><path d="M1015.6 682.4H1021.6M1018.6 679.4V685.4" stroke="#e0e0e0" stroke-width="1.2"/><rect x="1018.6" y="685.2" width="4" height="4" fill="#d8d8d8"/><rect x="1022" y="683.4" width="4.4" height="4.4" fill="#d8d8d8" stroke="#3b4453" stroke-width="0.8"/><rect x="1024.4" y="691" width="7" height="5" fill="#d8d8d8"/><path d="M1025.8 691V689.2A2 2 0 0 1 1029.8 688.4" stroke="#d8d8d8" stroke-width="1.1" fill="none"/><rect x="1037.1" y="676.5" width="22.1" height="20" fill="#5b8cc4"/><path d="M1043.4 690.6V683.6A2.9 2.9 0 0 1 1049.2 683.6V691.6A1.5 1.5 0 0 1 1046.2 691.6V685" stroke="#f4f4f4" stroke-width="1.3" fill="none"/><rect x="1048.4" y="690.4" width="6.2" height="5.6" fill="#f4f4f4"/><path d="M1049.8 690.4V688.6A1.7 1.7 0 0 1 1053.2 688.6V690.4" stroke="#f4f4f4" stroke-width="1" fill="none"/><rect x="1065.2" y="680.4" width="5.2" height="5.2" fill="none" stroke="#e0e0e0" stroke-width="1.1"/><circle cx="1077.4" cy="686.4" r="3" fill="none" stroke="#e0e0e0" stroke-width="1.1"/><path d="M1071.8 689.6L1075 695.4H1068.6Z" fill="none" stroke="#e0e0e0" stroke-width="1.1"/><rect x="1094.8" y="679.8" width="15.2" height="16.2" fill="#f0bc94"/><rect x="1099.6" y="681.6" width="6.4" height="1.8" fill="#dc7a34"/><rect x="1101.8" y="681.6" width="2.2" height="10.6" fill="#dc7a34"/><rect x="1099.2" y="691.4" width="7.4" height="1.8" fill="#dc7a34"/><circle cx="1103.6" cy="694.6" r="1.3" fill="none" stroke="#c05a20" stroke-width="0.8"/><circle cx="1106.6" cy="694.6" r="1.3" fill="none" stroke="#c05a20" stroke-width="0.8"/><path d="M1127 683.2H1145M1127 688.6H1145M1127 693.8H1145" stroke="#e8e8e8" stroke-width="1.7"/>
</svg></div>
</body></html>
